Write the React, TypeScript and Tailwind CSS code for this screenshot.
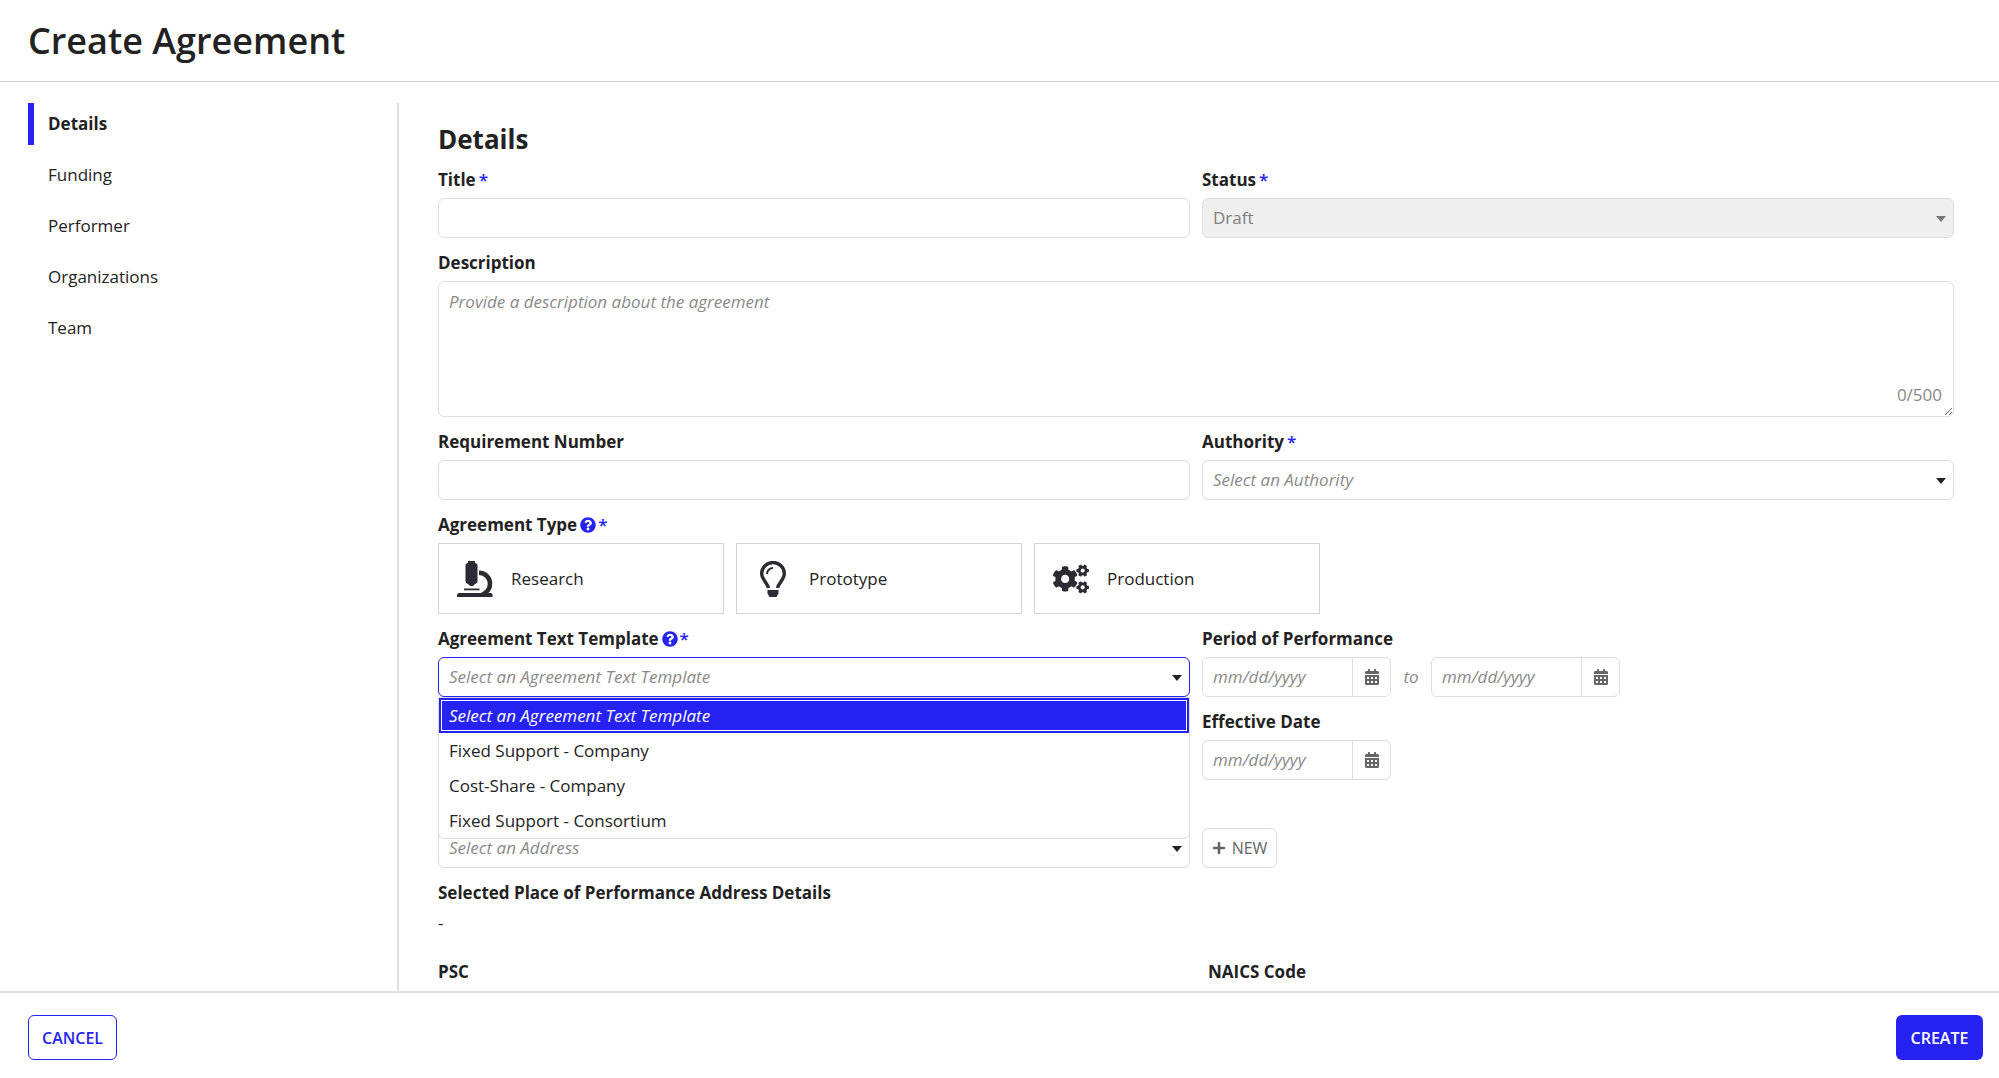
import { useState } from "react"
import type { ReactNode } from "react"
import { FaCalendarAlt, FaCogs, FaPlus, FaQuestionCircle } from "react-icons/fa"

// left side navigation
const sections = ["Details", "Funding", "Performer", "Organizations", "Team"]

const templates = [
    "Select an Agreement Text Template",
    "Fixed Support - Company",
    "Cost-Share - Company",
    "Fixed Support - Consortium",
]

const inputClass = "block w-full h-10 rounded-md border border-[#dedede] bg-white px-2.5 text-[17px] text-[#222] outline-none"

const MicroscopeIcon = () => (
    <svg viewBox="0 0 36 36" className="w-9 h-9" fill="#2b2b33">
        <path d="M11 0h7v2c1.500.3 2.500 1 2.500 2.500V20c0 1.500-.8 2.500-2.500 3l-2 2h-3l-2-2c-1.700-.5-2.500-1.500-2.500-3V4.500C8.500 3 9.500 2.300 11 2z" />
        <path d="M7 27.500h15.500v1.800H7z" />
        <path d="M22 11.800c6.500.2 11 5 11 11.200 0 5-3 8.500-8 11" fill="none" stroke="#2b2b33" strokeWidth="4.600" />
        <path d="M0 36v-1.500C0 33 1 32 2.500 32h31c1.500 0 2 1 2 2v2z" />
    </svg>
)

const BulbIcon = () => (
    <svg viewBox="0 0 36 36" className="w-9 h-9" fill="none" stroke="#2b2b33">
        <path d="M13.500 27C12.500 22 6.700 18.500 6.700 12.500a11.300 11 0 0 1 22.600 0C29.300 18.500 23.500 22 22.500 27" strokeWidth="3.400" />
        <path d="M12 13a6 6 0 0 1 6-6" strokeWidth="2" />
        <path d="M12.500 29h11v3.500L21.500 36h-7l-2-3.500z" fill="#2b2b33" stroke="none" />
    </svg>
)

const agreementTypes = [
    { name: "Research", icon: <MicroscopeIcon /> },
    { name: "Prototype", icon: <BulbIcon /> },
    { name: "Production", icon: <FaCogs className="w-9 h-9 text-[#2b2b33]" /> },
]

type LabelProps = { htmlFor?: string, required?: boolean, help?: boolean, children: ReactNode }

const Label = ({ htmlFor, required, help, children }: LabelProps) => (
    <div className="flex items-center h-6 mt-[13px] mb-1.5 font-bold">
        <label htmlFor={htmlFor}>{children}</label>
        {help && <button type="button" title="Help" className="ml-[3px] text-[#2522f2]"><FaQuestionCircle className="w-4 h-4" /></button>}
        {required && <span className={`${help ? "ml-0.5" : "ml-[3px]"} font-semibold text-[#2522f2]`}>*</span>}
    </div>
)

type SelectProps = { id: string, label?: string, placeholder: string, disabled?: boolean, open?: boolean, onToggle?: () => void }

const Select = ({ id, label, placeholder, disabled, open, onToggle }: SelectProps) => (
    <div className="relative">
        <select
            id={id}
            aria-label={label}
            disabled={disabled}
            onMouseDown={(e) => {
                if(onToggle) {
                    e.preventDefault()
                    onToggle()
                }
            }}
            className={`block w-full h-10 appearance-none rounded-md border px-2.5 text-[17px] outline-none ${open ? "border-[#2522f2]" : "border-[#dedede]"} ${disabled ? "bg-[#efefef] text-[#808080]" : "bg-white italic text-[#8a8a8a]"}`}
        >
            <option>{placeholder}</option>
        </select>
        <svg viewBox="0 0 10 6" className={`absolute right-2 top-[18px] w-2.5 h-1.5 pointer-events-none ${disabled ? "text-[#777]" : "text-[#222]"}`} fill="currentColor">
            <path d="M0 0h10L5 6z" />
        </svg>
    </div>
)

const DateInput = ({ id, label }: { id: string, label?: string }) => (
    <div className="flex w-[189px] h-10 rounded-md border border-[#dedede]">
        <input
            id={id}
            aria-label={label}
            placeholder="mm/dd/yyyy"
            className="w-[149px] px-2.5 outline-none placeholder:italic placeholder:text-[#8a8a8a]"
        />
        <button type="button" title="Open calendar" className="flex-1 flex items-center justify-center border-l border-[#dedede] text-[#666]">
            <FaCalendarAlt className="w-4 h-4" />
        </button>
    </div>
)

const App = () => {
    const [open, setOpen] = useState(true)
    const [selected, setSelected] = useState(0)

    return (
        <div className="flex flex-col h-screen bg-white font-['Open_Sans',sans-serif] text-[17px] text-[#222]">

            {/* header */}
            <header className="shrink-0 h-[82px] px-7 border-b border-[#d4d4d4]">
                <h1 className="text-[36px] leading-[82px] font-semibold">Create Agreement</h1>
            </header>

            <div className="flex-1 min-h-0 flex pt-[21px] pl-7">

                {/* navigation */}
                <nav className="shrink-0 w-[371px] flex flex-col gap-[9px] border-r-2 border-[#dedede]">
                    {sections.map((section, i) => (
                        <a
                            key={section}
                            href="#"
                            className={`block h-[42px] leading-[42px] pl-3.5 border-l-6 ${i === 0 ? "border-[#2522f2] font-bold" : "border-transparent"}`}
                        >
                            {section}
                        </a>
                    ))}
                </nav>

                {/* form */}
                <main className="flex-1 min-w-0 overflow-hidden pl-[39px] pr-[45px] pt-5">
                    <h2 className="text-[26px] leading-8 font-bold">Details</h2>
                    <div className="grid grid-cols-2 gap-x-3">
                        <div>
                            <Label htmlFor="title" required>Title</Label>
                            <input id="title" className={inputClass} />
                        </div>
                        <div>
                            <Label htmlFor="status" required>Status</Label>
                            <Select id="status" placeholder="Draft" disabled />
                        </div>
                    </div>

                    <Label htmlFor="description">Description</Label>
                    <div className="relative">
                        <textarea
                            id="description"
                            placeholder="Provide a description about the agreement"
                            className="block w-full h-[136px] resize-y rounded-md border border-[#dedede] px-2.5 py-2 leading-6 outline-none placeholder:italic placeholder:text-[#8a8a8a]"
                        />
                        <span className="absolute right-3 bottom-2.5 leading-6 text-[#888]">0/500</span>
                    </div>

                    <div className="grid grid-cols-2 gap-x-3">
                        <div>
                            <Label htmlFor="requirement">Requirement Number</Label>
                            <input id="requirement" className={inputClass} />
                        </div>
                        <div>
                            <Label htmlFor="authority" required>Authority</Label>
                            <Select id="authority" placeholder="Select an Authority" />
                        </div>
                    </div>

                    <Label required help>Agreement Type</Label>
                    <div className="flex gap-3">
                        {agreementTypes.map((type) => (
                            <button key={type.name} type="button" className="flex items-center gap-[18px] w-[286px] h-[71px] pl-[18px] border border-[#d4d4d4]">
                                {type.icon}
                                {type.name}
                            </button>
                        ))}
                    </div>

                    <div className="grid grid-cols-2 gap-x-3">
                        <div>
                            <Label htmlFor="template" required help>Agreement Text Template</Label>
                            <div className="relative">
                                <Select id="template" placeholder={templates[selected]} open={open} onToggle={() => setOpen(!open)} />
                                {/* options of the open menu */}
                                {open && (
                                    <ul role="listbox" className="absolute inset-x-0 top-10 z-10 rounded-b-md border border-[#dedede] bg-white">
                                        {templates.map((template, i) => (
                                            <li
                                                key={template}
                                                role="option"
                                                aria-selected={i === selected}
                                                onClick={() => {
                                                    setSelected(i)
                                                    setOpen(false)
                                                }}
                                                className={`h-[35px] leading-[35px] px-2.5 ${i === 0 ? "italic" : ""} ${i === selected ? "bg-[#2522f2] text-white outline outline-white -outline-offset-3" : ""}`}
                                            >
                                                {template}
                                            </li>
                                        ))}
                                    </ul>
                                )}
                            </div>
                        </div>
                        <div>
                            <Label htmlFor="start">Period of Performance</Label>
                            <div className="flex items-center">
                                <DateInput id="start" />
                                <span className="w-10 text-center italic text-[#8a8a8a]">to</span>
                                <DateInput id="end" label="End of performance" />
                            </div>
                            <Label htmlFor="effective">Effective Date</Label>
                            <DateInput id="effective" />
                        </div>
                    </div>

                    <div className="grid grid-cols-2 gap-x-3 mt-12">
                        <Select id="address" label="Place of performance address" placeholder="Select an Address" />
                        <button type="button" className="flex items-center justify-center gap-1.5 w-[75px] h-10 rounded-md border border-[#dedede] text-base text-[#666]">
                            <FaPlus className="w-3.5 h-3.5" />
                            NEW
                        </button>
                    </div>

                    <Label>Selected Place of Performance Address Details</Label>
                    <p className="leading-6">-</p>

                    <div className="grid grid-cols-2 gap-x-6 mt-3">
                        <div>
                            <Label htmlFor="psc">PSC</Label>
                            <input id="psc" className={`${inputClass} mt-2`} />
                        </div>
                        <div>
                            <Label htmlFor="naics">NAICS Code</Label>
                            <input id="naics" className={`${inputClass} mt-2`} />
                        </div>
                    </div>
                </main>
            </div>

            {/* footer */}
            <footer className="shrink-0 flex justify-between h-[87px] pt-[22px] pl-7 pr-4 border-t-2 border-[#e2e2e2]">
                <button type="button" className="w-[89px] h-[45px] rounded-md border border-[#2522f2] text-base font-semibold text-[#2522f2]">CANCEL</button>
                <button type="button" className="w-[87px] h-[45px] rounded-md bg-[#2522f2] text-base font-semibold text-white">CREATE</button>
            </footer>
        </div>
    )
}

export default App
